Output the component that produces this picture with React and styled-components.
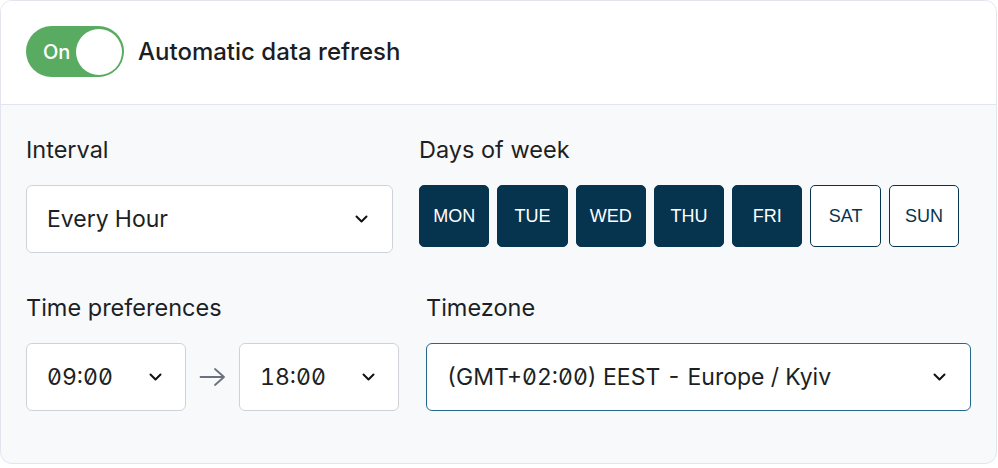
import React from "react";
import styled, { createGlobalStyle } from "styled-components";

const Global = createGlobalStyle`
  html, body { margin: 0; padding: 0; background: #ffffff; }
  body { font-family: Inter, "Noto Sans", sans-serif; color: #1d1f24; }
  * { box-sizing: border-box; }
`;

const Card = styled.div`
  width: 997px;
  height: 464px;
  border: 1px solid #e2e5ee;
  border-radius: 12px;
  overflow: hidden;
  background: #f8f9fb;
  display: flex;
  flex-direction: column;
`;

const Header = styled.div`
  height: 104px;
  background: #ffffff;
  border-bottom: 1px solid #e1e5ef;
  display: flex;
  align-items: center;
  gap: 14px;
  padding: 0 25px;
  padding-bottom: 2px;
`;

const Toggle = styled.div`
  width: 98px;
  height: 51px;
  border-radius: 26px;
  background: #5aab62;
  display: flex;
  align-items: center;
  justify-content: space-between;
  padding: 0 2px 0 17px;
`;

const ToggleText = styled.span`
  color: #ffffff;
  font-size: 20px;
  font-weight: 500;
`;

const Knob = styled.span`
  width: 46px;
  height: 46px;
  border-radius: 50%;
  background: #ffffff;
`;

const HeaderTitle = styled.span`
  font-size: 24px;
  font-weight: 500;
  color: #1c1e24;
`;

const Body = styled.div`
  flex: 1;
  padding: 30px 25px 0 25px;
  display: flex;
  flex-direction: column;
  gap: 40px;
`;

const Row = styled.div`
  display: flex;
  gap: ${(p) => p.$gap}px;
`;

const Field = styled.div`
  display: flex;
  flex-direction: column;
  gap: 21px;
  width: ${(p) => (p.$width ? `${p.$width}px` : "auto")};
`;

const Label = styled.div`
  font-size: 23.5px;
  line-height: 29px;
  color: #1d1f24;
`;

const Select = styled.div`
  height: 68px;
  width: ${(p) => p.$width}px;
  background: #ffffff;
  border: 1px solid ${(p) => (p.$focus ? "#23698c" : "#cfd2d8")};
  border-radius: 6px;
  display: flex;
  align-items: center;
  justify-content: space-between;
  padding: 0 ${(p) => p.$pr}px 0 20px;
  font-size: 23px;
  color: #1d1f24;
  font-feature-settings: "zero" 1, "tnum" 1;
`;

const Days = styled.div`
  display: flex;
  gap: 8px;
`;

const Day = styled.div`
  width: 70.3px;
  height: 62px;
  border-radius: 5px;
  display: flex;
  align-items: center;
  justify-content: center;
  font-family: "Liberation Sans", Arial, sans-serif;
  font-size: 18px;
  background: ${(p) => (p.$on ? "#06344f" : "#ffffff")};
  color: ${(p) => (p.$on ? "#ffffff" : "#06344f")};
  border: 1px solid #06344f;
`;

const TimeRow = styled.div`
  display: flex;
  align-items: center;
  gap: 13px;
`;

const ArrowIcon = styled.svg`
  width: 27px;
  height: 20px;
  flex: none;
`;

const Chev = styled.svg`
  width: 13px;
  height: 8px;
  flex: none;
`;

const Chevron = () => (
  <Chev viewBox="0 0 13 8">
    <path d="M1.5 1.5 L6.5 6.5 L11.5 1.5" fill="none" stroke="#111" strokeWidth="2" strokeLinecap="round" strokeLinejoin="round" />
  </Chev>
);

const days = [
  ["MON", true],
  ["TUE", true],
  ["WED", true],
  ["THU", true],
  ["FRI", true],
  ["SAT", false],
  ["SUN", false],
];

export default function App() {
  return (
    <>
      <Global />
      <Card>
        <Header>
          <Toggle>
            <ToggleText>On</ToggleText>
            <Knob />
          </Toggle>
          <HeaderTitle>Automatic data refresh</HeaderTitle>
        </Header>
        <Body>
          <Row $gap={26}>
            <Field $width={367}>
              <Label>Interval</Label>
              <Select $width={367} $pr={24}>
                <span>Every Hour</span>
                <Chevron />
              </Select>
            </Field>
            <Field>
              <Label>Days of week</Label>
              <Days>
                {days.map(([d, on]) => (
                  <Day key={d} $on={on}>{d}</Day>
                ))}
              </Days>
            </Field>
          </Row>
          <Row $gap={27}>
            <Field $width={373}>
              <Label>Time preferences</Label>
              <TimeRow>
                <Select $width={160} $pr={23}>
                  <span>09:00</span>
                  <Chevron />
                </Select>
                <ArrowIcon viewBox="0 0 27 20">
                  <path d="M1.5 10 H25 M16 2 L25 10 L16 18" fill="none" stroke="#6b7080" strokeWidth="1.8" strokeLinecap="round" strokeLinejoin="round" />
                </ArrowIcon>
                <Select $width={160} $pr={23}>
                  <span>18:00</span>
                  <Chevron />
                </Select>
              </TimeRow>
            </Field>
            <Field>
              <Label>Timezone</Label>
              <Select $width={545} $pr={24} $focus>
                <span>(GMT+02:00) EEST - Europe / Kyiv</span>
                <Chevron />
              </Select>
            </Field>
          </Row>
        </Body>
      </Card>
    </>
  );
}
